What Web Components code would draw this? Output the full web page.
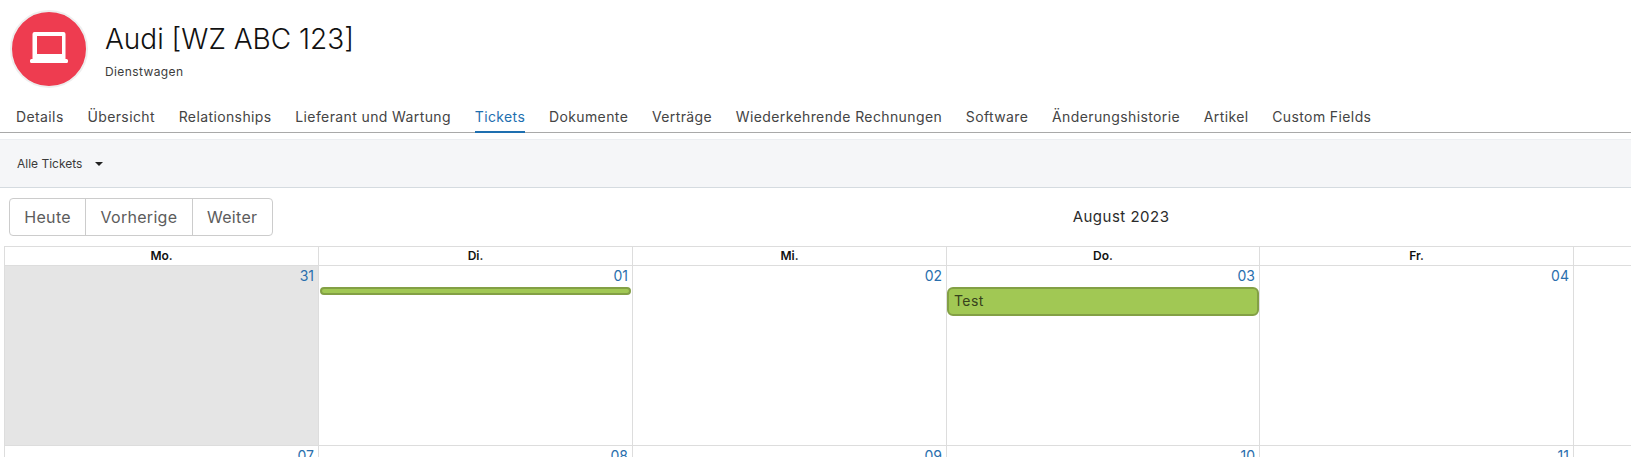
<!DOCTYPE html>
<html lang="de">
<head>
<meta charset="utf-8">
<title>Audi [WZ ABC 123]</title>
<style>
  html, body { margin: 0; height: 457px; overflow: hidden; background: #fff; }
  body { font-family: Inter, "Liberation Sans", sans-serif; color: #212529; }
</style>
</head>
<body>
<asset-header title="Audi [WZ ABC 123]" subtitle="Dienstwagen"></asset-header>
<tab-bar>
  <tab-item>Details</tab-item>
  <tab-item>Übersicht</tab-item>
  <tab-item>Relationships</tab-item>
  <tab-item>Lieferant und Wartung</tab-item>
  <tab-item active>Tickets</tab-item>
  <tab-item>Dokumente</tab-item>
  <tab-item>Verträge</tab-item>
  <tab-item>Wiederkehrende Rechnungen</tab-item>
  <tab-item>Software</tab-item>
  <tab-item>Änderungshistorie</tab-item>
  <tab-item>Artikel</tab-item>
  <tab-item>Custom Fields</tab-item>
</tab-bar>
<filter-bar label="Alle Tickets"></filter-bar>
<cal-toolbar month="August 2023"></cal-toolbar>
<cal-month>
  <cal-head>Mo.</cal-head><cal-head>Di.</cal-head><cal-head>Mi.</cal-head><cal-head>Do.</cal-head><cal-head>Fr.</cal-head><cal-head></cal-head>
  <cal-day date="31" other></cal-day>
  <cal-day date="01"><cal-event thin></cal-event></cal-day>
  <cal-day date="02"></cal-day>
  <cal-day date="03"><cal-event>Test</cal-event></cal-day>
  <cal-day date="04"></cal-day>
  <cal-day></cal-day>
  <cal-day date="07"></cal-day>
  <cal-day date="08"></cal-day>
  <cal-day date="09"></cal-day>
  <cal-day date="10"></cal-day>
  <cal-day date="11"></cal-day>
  <cal-day></cal-day>
</cal-month>

<script>
// Kleine Hilfsklasse: Shadow DOM aus einem String aufbauen
class ShadowEl extends HTMLElement {
  constructor(html) {
    super();
    this.attachShadow({ mode: 'open' });
    this.shadowRoot.innerHTML = html;
  }
}

class AssetHeader extends ShadowEl {
  constructor() {
    super(`
      <style>
        :host { display: flex; align-items: flex-start; height: 100px; padding: 10px 0 0 10px; box-sizing: border-box; gap: 17px; }
        .avatar { width: 74px; height: 74px; border-radius: 50%; background: #ee3c50; border: 2px solid #eeeeee;
          display: flex; align-items: center; justify-content: center; flex: none; }
        svg { width: 38px; height: 31px; fill: #fff; margin-top: -3px; }
        .text { display: flex; flex-direction: column; padding-top: 11px; }
        h1 { margin: 0; font: 300 28px/36px Inter, sans-serif; color: #111111; }
        .sub { font-size: 12px; line-height: 18px; margin-top: 6px; color: #3c3c3c; letter-spacing: 0.4px; }
      </style>
      <div class="avatar">
        <svg viewBox="0 0 38 31"><path fill-rule="evenodd" d="M4.500 0h29a2 2 0 0 1 2 2v25h1a1.500 1.500 0 0 1 1.500 1.500v1a1.500 1.500 0 0 1-1.500 1.500h-35A1.500 1.500 0 0 1 0 29.500v-1A1.500 1.500 0 0 1 1.500 27h1V2a2 2 0 0 1 2-2zM7 4v18h25V4z"/></svg>
      </div>
      <div class="text"><h1></h1><div class="sub"></div></div>`);
  }
  connectedCallback() {
    this.shadowRoot.querySelector('h1').textContent = this.getAttribute('title');
    this.shadowRoot.querySelector('.sub').textContent = this.getAttribute('subtitle');
  }
}

class TabBar extends ShadowEl {
  constructor() {
    super(`
      <style>
        :host { display: flex; gap: 23.7px; height: 32px; padding-left: 16px; border-bottom: 1px solid #a9a9a9; }
      </style>
      <slot></slot>`);
  }
}

class TabItem extends ShadowEl {
  constructor() {
    super(`
      <style>
        :host { display: block; font-size: 14px; letter-spacing: 0.39px; line-height: 34px; height: 32px; color: #444444; white-space: nowrap; box-sizing: border-box; }
        :host([active]) { color: #1e6fb0; border-bottom: 2px solid #1e6fb0; height: 33px; }
      </style>
      <slot></slot>`);
  }
}

class FilterBar extends ShadowEl {
  constructor() {
    super(`
      <style>
        :host { display: flex; align-items: center; gap: 13px; height: 47px; margin-top: 6px; padding-left: 17px; background: #f5f6f8;
          border-top: 1px solid #eceef1; border-bottom: 1px solid #d5dbe0; font-size: 12px; color: #3a3a3a; }
        i { width: 0; height: 0; border: 4px solid transparent; border-top-color: #222; border-bottom: 0; }
      </style>
      <span></span><i></i>`);
  }
  connectedCallback() {
    this.shadowRoot.querySelector('span').textContent = this.getAttribute('label');
  }
}

class CalToolbar extends ShadowEl {
  constructor() {
    super(`
      <style>
        :host { display: flex; align-items: center; gap: 800px; height: 38px; margin: 10px 0 10px 9px; }
        .group { display: flex; border: 1px solid #cccccc; border-radius: 4px; height: 38px; box-sizing: border-box; }
        .group span { padding: 0 14.3px; font-size: 16px; letter-spacing: 0.3px; line-height: 36px; color: #5c5c5c; border-left: 1px solid #cccccc; }
        .group span:first-child { border-left: 0; }
        .title { font-size: 15px; letter-spacing: 0.5px; color: #2b2b2b; padding-bottom: 2px; }
      </style>
      <div class="group"><span>Heute</span><span>Vorherige</span><span>Weiter</span></div>
      <div class="title"></div>`);
  }
  connectedCallback() {
    this.shadowRoot.querySelector('.title').textContent = this.getAttribute('month');
  }
}

class CalMonth extends ShadowEl {
  constructor() {
    super(`
      <style>
        :host { display: grid; grid-template-columns: 314px 314px 314px 313px 314px 58px; grid-template-rows: 19px 180px 180px; margin-left: 4px;
          height: 210px; overflow: hidden; border-left: 1px solid #dddddd; border-top: 1px solid #dddddd; }
      </style>
      <slot></slot>`);
  }
}

class CalHead extends ShadowEl {
  constructor() {
    super(`
      <style>
        :host { display: block; text-align: center; font-size: 12px; font-weight: 600; line-height: 18px; color: #111;
          border-right: 1px solid #dddddd; border-bottom: 1px solid #dddddd; }
      </style>
      <slot></slot>`);
  }
}

class CalDay extends ShadowEl {
  constructor() {
    super(`
      <style>
        :host { display: block; border-right: 1px solid #dddddd; border-bottom: 1px solid #dddddd; box-sizing: border-box; }
        :host([other]) { background: #e5e5e5; }
        .num { text-align: right; font-size: 14px; line-height: 20px; height: 21px; padding-right: 4px; color: #2a6fad; }
      </style>
      <div class="num"></div>
      <slot></slot>`);
  }
  connectedCallback() {
    this.shadowRoot.querySelector('.num').textContent = this.getAttribute('date') || '';
  }
}

class CalEvent extends ShadowEl {
  constructor() {
    super(`
      <style>
        :host { display: block; height: 29px; box-sizing: border-box; background: #a1c854; border: 2px solid #83a045;
          border-radius: 6px; font-size: 14px; letter-spacing: 0.4px; line-height: 24px; padding-left: 5px; color: #37421c; }
        :host([thin]) { height: 8px; margin: 0 1px; border-radius: 4px; padding: 0; }
      </style>
      <slot></slot>`);
  }
}

// Registrar los componentes
customElements.define('asset-header', AssetHeader);
customElements.define('tab-bar', TabBar);
customElements.define('tab-item', TabItem);
customElements.define('filter-bar', FilterBar);
customElements.define('cal-toolbar', CalToolbar);
customElements.define('cal-month', CalMonth);
customElements.define('cal-head', CalHead);
customElements.define('cal-day', CalDay);
customElements.define('cal-event', CalEvent);
</script>
</body>
</html>
